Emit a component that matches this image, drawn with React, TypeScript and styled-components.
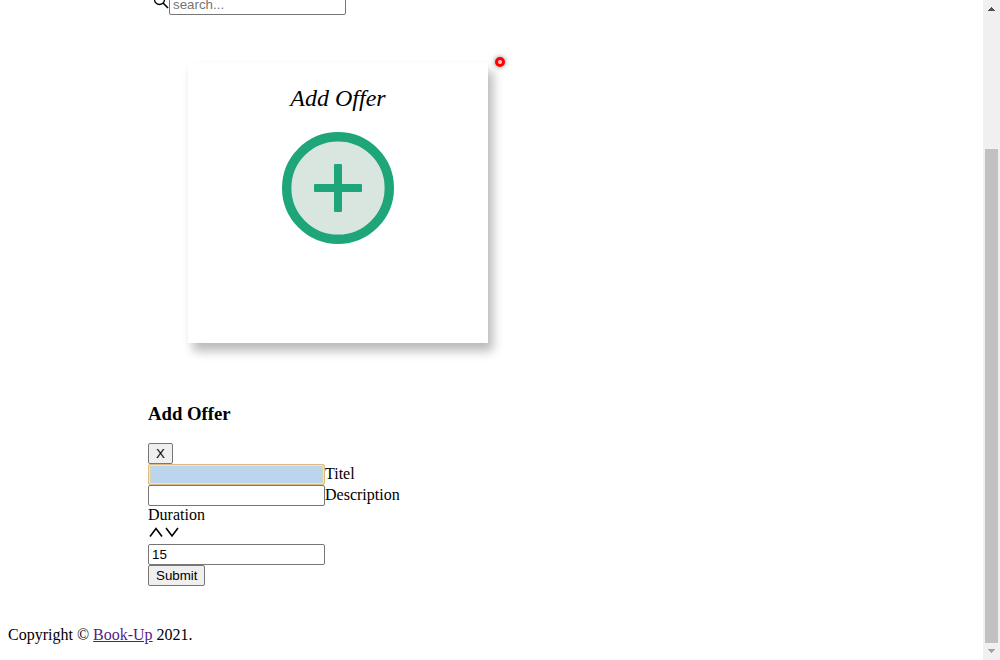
import React from "react";
import styled, { createGlobalStyle } from "styled-components";

const GlobalStyle = createGlobalStyle`
  * { box-sizing: border-box; }
  body {
    margin: 0;
    background: #fff;
    color: #000;
    font: 16px/18px "Liberation Serif", "Times New Roman", serif;
  }
`;

const Page = styled.div`
  display: flex;
  height: 100vh;
  overflow: hidden;
`;

const Content = styled.div`
  flex: 1;
  min-width: 0;
`;

const Main = styled.main`
  padding-left: 148px;
`;

const SearchBar = styled.div`
  display: flex;
  align-items: flex-end;
  height: 15px;
  padding-left: 5px;
  overflow: hidden;
`;

const SearchIcon = styled.svg`
  flex: none;
  width: 16px;
  height: 16px;
  margin-bottom: 6px;
`;

const TextField = styled.input<{ $filled?: boolean }>`
  width: 177px;
  height: 21px;
  flex: none;
  margin: 0;
  padding: 1px 3px;
  border: 1px solid #767676;
  border-radius: 2px;
  background: #fff;
  color: #000;
  font-family: "Liberation Sans", Arial, sans-serif;
  outline: none;
  &::placeholder { color: #757575; }
  ${(p) =>
    p.$filled &&
    `
    border-color: #dfba82;
    background: #bbd5ec;
    box-shadow: inset 0 0 0 1px #f5e6b4, inset 2px 0 #d0dab4, inset -2px 0 #d0dab4;
  `}
`;

const Card = styled.section`
  position: relative;
  display: flex;
  flex-direction: column;
  align-items: center;
  width: 300px;
  height: 280px;
  margin: 48px 40px 60px;
  padding-top: 20px;
  background: #fff;
  box-shadow: 5px 8px 10px rgba(0, 0, 0, 0.28);
`;

const CardTitle = styled.h2`
  margin: 0 0 19px;
  font-size: 24px;
  line-height: 30px;
  font-style: italic;
  font-weight: 400;
`;

const AddButton = styled.button`
  width: 112px;
  height: 112px;
  padding: 0;
  border: 0;
  background: none;
  svg { display: block; }
`;

const Marker = styled.span`
  position: absolute;
  top: -6px;
  right: -17px;
  width: 10px;
  height: 10px;
  border: 3px solid #f00;
  border-radius: 50%;
  background: #fcc;
  box-shadow: 0 0 5px rgba(0, 0, 0, 0.5);
`;

const FormTitle = styled.h3`
  margin: 0 0 18px;
  line-height: 22px;
`;

const OfferForm = styled.form`
  display: flex;
  flex-direction: column;
  align-items: flex-start;
`;

const Row = styled.div`
  display: flex;
  align-items: flex-start;
  line-height: 20px;
`;

const FormButton = styled.button`
  height: 21px;
  padding: 0 7px;
  border: 1px solid #767676;
  border-radius: 2px;
  background: #efefef;
  color: #000;
  font-family: "Liberation Sans", Arial, sans-serif;
`;

const Stepper = styled.div`
  display: flex;
  height: 20px;
`;

const StepButton = styled.button`
  width: 16px;
  height: 16px;
  padding: 0;
  border: 0;
  background: none;
  svg { display: block; }
`;

const Footer = styled.footer`
  padding: 40px 8px 0;
  a { color: #551a8b; }
`;

const Scrollbar = styled.div`
  display: flex;
  flex-direction: column;
  align-items: center;
  justify-content: space-between;
  width: 17px;
  background: #f0f0f0;
  svg { display: block; flex: none; }
`;

const Thumb = styled.div`
  width: 13px;
  height: calc(75% - 1px);
  margin-top: auto;
  background: #c1c1c1;
`;

const Chevron = ({ d }: { d: string }) => (
  <svg width="16" height="16" viewBox="0 0 16 16" fill="none" stroke="#000" strokeWidth="1.6">
    <path d={d} />
  </svg>
);

export default function App() {
  return (
    <Page>
      <GlobalStyle />
      <Content>
        <Main>
          <SearchBar>
            <SearchIcon viewBox="0 0 16 16" fill="none" stroke="#000" strokeWidth="1.3">
              <circle cx="6.5" cy="6.5" r="5" />
              <path d="M10 10 15 15" strokeWidth="1.6" />
            </SearchIcon>
            <TextField type="search" placeholder="search..." aria-label="Search" />
          </SearchBar>
          <Card>
            <CardTitle>Add Offer</CardTitle>
            <AddButton type="button" aria-label="Add offer">
              <svg width="112" height="112" viewBox="0 0 112 112">
                <circle cx="56" cy="56" r="51.3" fill="#d9e6df" stroke="#1ea67a" strokeWidth="9.4" />
                <rect x="32" y="52" width="48" height="8" rx="1" fill="#1ea67a" />
                <rect x="52" y="32" width="8" height="48" rx="1" fill="#1ea67a" />
              </svg>
            </AddButton>
            <Marker />
          </Card>
          <FormTitle>Add Offer</FormTitle>
          <OfferForm>
            <FormButton type="button">X</FormButton>
            <Row>
              <TextField id="titel" $filled />
              <label htmlFor="titel">Titel</label>
            </Row>
            <Row>
              <TextField id="description" />
              <label htmlFor="description">Description</label>
            </Row>
            <label htmlFor="duration">Duration</label>
            <Stepper>
              <StepButton type="button" aria-label="Increase duration">
                <Chevron d="M2 12.5 8 4.5 14 12.5" />
              </StepButton>
              <StepButton type="button" aria-label="Decrease duration">
                <Chevron d="M2 4 8 12 14 4" />
              </StepButton>
            </Stepper>
            <TextField id="duration" defaultValue="15" />
            <FormButton type="submit">Submit</FormButton>
          </OfferForm>
        </Main>
        <Footer>
          Copyright © <a href="#book-up">Book-Up</a> 2021.
        </Footer>
      </Content>
      <Scrollbar aria-hidden="true">
        <svg width="17" height="17" shapeRendering="crispEdges">
          <path d="M5 11h7L8.500 7z" fill="#505050" />
        </svg>
        <Thumb />
        <svg width="17" height="17" shapeRendering="crispEdges">
          <path d="M5 6h7L8.500 10z" fill="#a3a3a3" />
        </svg>
      </Scrollbar>
    </Page>
  );
}
